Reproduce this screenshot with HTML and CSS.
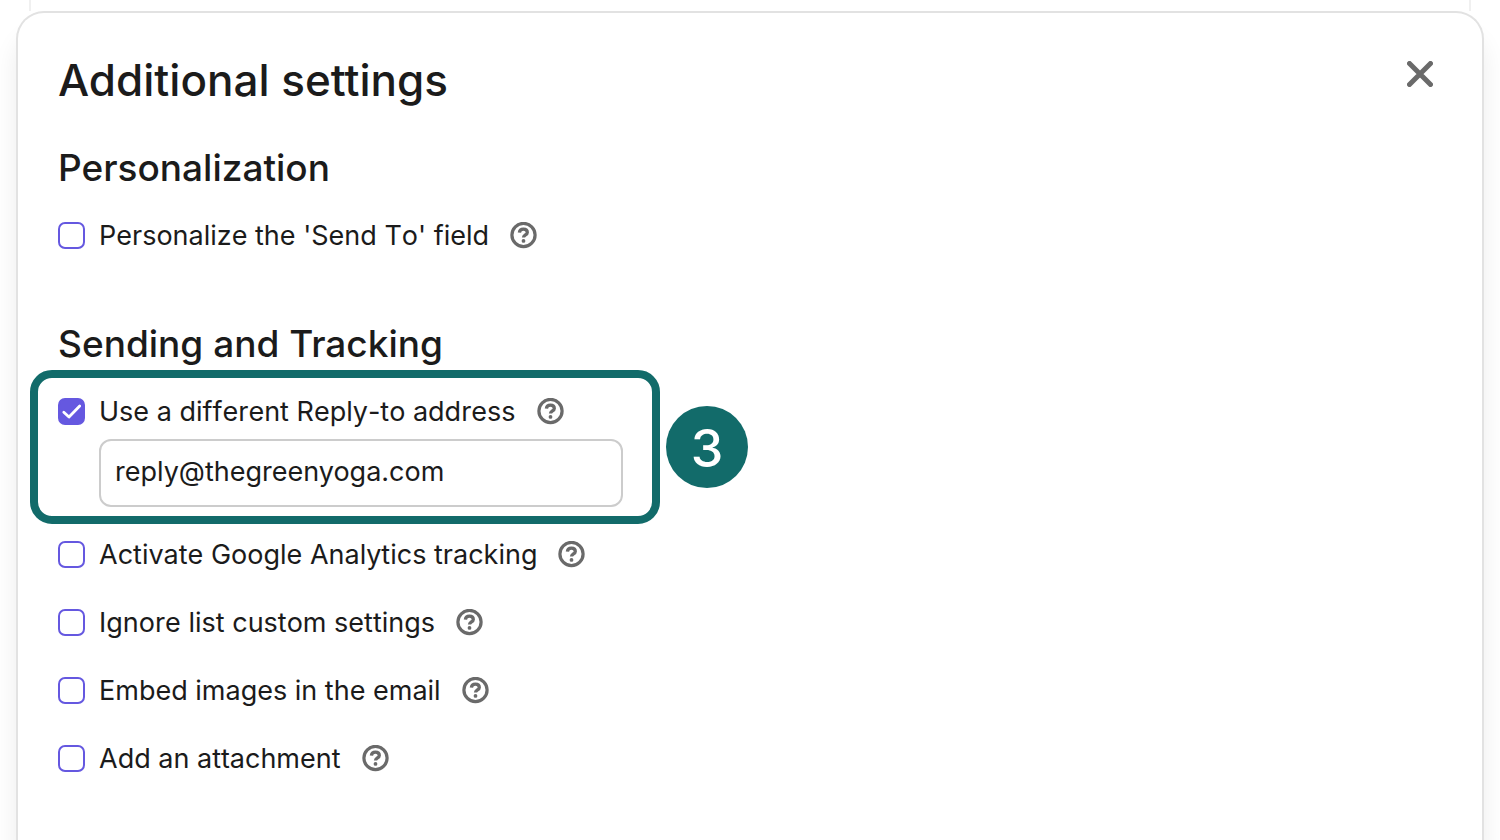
FILE: index.html
```html
<!DOCTYPE html>
<html lang="en">
<head>
    <meta charset="UTF-8">
    <title>Additional settings</title>
    <link rel="stylesheet" href="styles.css">
</head>
<body>
<svg class="sprite" aria-hidden="true">
    <symbol id="icon-help" viewBox="0 0 27 27">
        <circle cx="13.5" cy="13" r="11.6" fill="none" stroke="currentColor" stroke-width="3.2"/>
        <path d="M9.4 10.6C9.6 8.4 11.2 7.2 13.4 7.2C15.7 7.2 17.3 8.5 17.3 10.4C17.3 12.9 13.5 13 13.5 15.6" fill="none" stroke="currentColor" stroke-width="3.3"/>
        <circle cx="13.5" cy="18.9" r="1.9" fill="currentColor"/>
    </symbol>
</svg>

<div class="page-card"></div>
<main class="modal">
    <header class="modal-header">
        <h1>Additional settings</h1>
        <button type="button" class="close" aria-label="Close">
            <svg viewBox="0 0 26 26" width="26" height="26">
                <path d="M2.5 2.5L23.5 23.5M23.5 2.5L2.5 23.5" stroke="currentColor" stroke-width="5" stroke-linecap="round"/>
            </svg>
        </button>
    </header>

    <section class="personalization">
        <h2>Personalization</h2>
        <div class="option">
            <input type="checkbox" id="send_to">
            <label for="send_to">Personalize the 'Send To' field</label>
            <button type="button" class="help" aria-label="Help"><svg><use href="#icon-help"/></svg></button>
        </div>
    </section>

    <section>
        <h2>Sending and Tracking</h2>
        <div class="step">
            <div class="highlight">
                <div class="option">
                    <input type="checkbox" id="reply_to" checked>
                    <label for="reply_to">Use a different Reply-to address</label>
                    <button type="button" class="help" aria-label="Help"><svg><use href="#icon-help"/></svg></button>
                </div>
                <input type="email" class="address" aria-label="Reply-to address" value="reply@thegreenyoga.com">
            </div>
            <span class="badge">3</span>
        </div>
        <div class="options">
            <div class="option">
                <input type="checkbox" id="analytics">
                <label for="analytics">Activate Google Analytics tracking</label>
                <button type="button" class="help" aria-label="Help"><svg><use href="#icon-help"/></svg></button>
            </div>
            <div class="option">
                <input type="checkbox" id="custom_settings">
                <label for="custom_settings">Ignore list custom settings</label>
                <button type="button" class="help" aria-label="Help"><svg><use href="#icon-help"/></svg></button>
            </div>
            <div class="option">
                <input type="checkbox" id="embed_images">
                <label for="embed_images">Embed images in the email</label>
                <button type="button" class="help" aria-label="Help"><svg><use href="#icon-help"/></svg></button>
            </div>
            <div class="option">
                <input type="checkbox" id="attachment">
                <label for="attachment">Add an attachment</label>
                <button type="button" class="help" aria-label="Help"><svg><use href="#icon-help"/></svg></button>
            </div>
        </div>
    </section>
</main>
</body>
</html>
```
FILE: styles.css
```css
* {
    box-sizing: border-box;
}
body {
    display: flex;
    flex-direction: column;
    margin: 0;
    height: 100vh;
    overflow: hidden;
    background: #ffffff;
    color: #1b1b1b;
    font-family: Inter, "Liberation Sans", sans-serif;
    font-size: 27px;
    line-height: 27px;
}
.sprite {
    display: none;
}
.page-card {
    flex: none;
    height: 11px;
    margin: 0 29px;
    border: solid #f0f0f0;
    border-width: 0 2px;
}
.modal {
    flex: 1;
    margin: 0 16px;
    padding: 43px 40px;
    background: #ffffff;
    border: 2px solid #e2e2e2;
    border-bottom: none;
    border-radius: 28px 28px 0 0;
    box-shadow: 0 24px 24px rgba(0, 0, 0, 0.08);
}
.modal-header {
    display: flex;
    justify-content: space-between;
    align-items: flex-start;
    margin-bottom: 44px;
}
h1, h2 {
    margin: 0;
    font-weight: 500;
}
h1 {
    font-size: 44px;
    line-height: 48px;
}
h2 {
    font-size: 37px;
    line-height: 40px;
}
button {
    padding: 0;
    border: none;
    background: none;
    color: #6a6a6a;
    cursor: pointer;
}
.close {
    padding: 5px 9px;
}
.close svg, .help svg {
    display: block;
}
.help, .help svg {
    width: 27px;
    height: 27px;
}
.help {
    margin-left: 7px;
}
.personalization {
    margin-bottom: 75px;
}
.personalization h2 {
    margin-bottom: 34px;
}
.option {
    display: flex;
    align-items: center;
    gap: 14px;
}
.option label {
    font-kerning: none;
}
.option input {
    appearance: none;
    width: 27px;
    height: 27px;
    margin: 0;
    border: 2px solid #6558e0;
    border-radius: 7px;
    background: #ffffff;
}
.option input:checked {
    background: #6558e0 url("data:image/svg+xml,%3Csvg xmlns='http://www.w3.org/2000/svg' viewBox='0 0 27 27'%3E%3Cpath d='M5.8 14.2L11 19L21.7 8' fill='none' stroke='white' stroke-width='2.8' stroke-linecap='round' stroke-linejoin='round'/%3E%3C/svg%3E") center / 27px 27px no-repeat;
}
.step {
    display: flex;
    align-items: center;
    gap: 6px;
    margin: 6px 0 17px -28px;
}
.highlight {
    padding: 20px 29px 9px 20px;
    border: 8px solid #126b6a;
    border-radius: 22px;
}
.address {
    display: block;
    width: 524px;
    height: 68px;
    margin: 14px 0 0 41px;
    padding: 0 14px 4px;
    border: 2px solid #cccccc;
    border-radius: 12px;
    background: #ffffff;
    color: inherit;
    font: inherit;
}
.badge {
    width: 82px;
    height: 82px;
    border-radius: 50%;
    background: #126b6a;
    color: #ffffff;
    font-size: 52px;
    font-weight: 500;
    line-height: 86px;
    text-align: center;
}
.options {
    display: flex;
    flex-direction: column;
    gap: 41px;
}
```
